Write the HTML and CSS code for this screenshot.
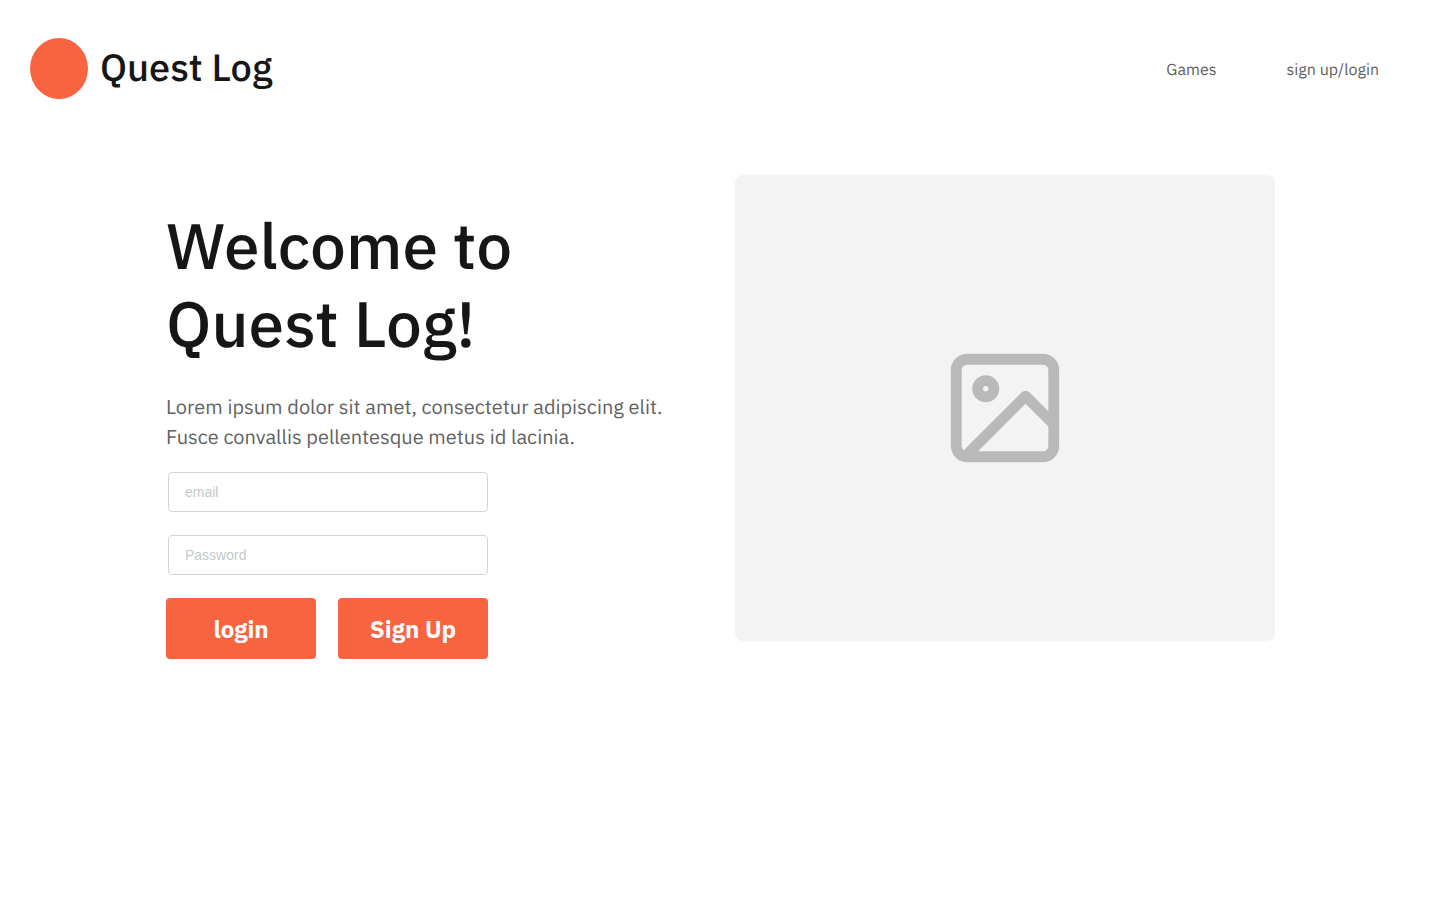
FILE: index.html
```html
<!DOCTYPE html>
<html lang="en">
<head>
  <meta charset="utf-8">
  <meta name="viewport" content="width=device-width, initial-scale=1">
  <title>Quest Log</title>
  <link rel="stylesheet" href="styles.css">
</head>
<body>
  <header class="site-header">
    <a class="brand" href="#">
      <span class="brand-mark"></span>
      <span class="brand-name">Quest Log</span>
    </a>
    <nav class="site-nav">
      <a href="#games">Games</a>
      <a href="#login">sign up/login</a>
    </nav>
  </header>
  <main class="hero">
    <section class="intro">
      <h1 class="title">Welcome to<br>Quest Log!</h1>
      <p class="lead">Lorem ipsum dolor sit amet, consectetur adipiscing elit.<br>Fusce convallis pellentesque metus id lacinia.</p>
      <form class="login-form" id="login">
        <input class="field" type="email" placeholder="email" aria-label="email">
        <input class="field" type="password" placeholder="Password" aria-label="Password">
        <div class="actions">
          <button class="button" type="submit">login</button>
          <button class="button" type="button">Sign Up</button>
        </div>
      </form>
    </section>
    <div class="picture">
      <svg class="picture-icon" viewBox="0 0 24 24" fill="none" stroke="currentColor" stroke-width="2" stroke-linecap="round" stroke-linejoin="round" aria-hidden="true">
        <rect x="3" y="3" width="18" height="18" rx="2"/>
        <circle cx="8.45" cy="8.45" r="1.5"/>
        <polyline points="21 15 15.8 9.8 4.8 20.8"/>
      </svg>
    </div>
  </main>
</body>
</html>
```

FILE: styles.css
```css
* {
  box-sizing: border-box;
}

body {
  margin: 0;
  background: #fff;
  color: #161616;
  font-family: "IBM Plex Sans", Roboto, "Noto Sans", sans-serif;
  text-rendering: geometricPrecision;
}

a {
  color: inherit;
  text-decoration: none;
}

.site-header {
  display: flex;
  align-items: center;
  justify-content: space-between;
  padding: 38px 61px 0 30px;
}

.brand {
  display: flex;
  align-items: center;
  gap: 12px;
}

.brand-mark {
  width: 58px;
  height: 61px;
  border-radius: 50%;
  background: #f86440;
}

.brand-name {
  padding-bottom: 2px;
  font-size: 38px;
  font-weight: 500;
  line-height: 52px;
}

.site-nav {
  display: flex;
  gap: 70px;
  padding-top: 2px;
  color: #626262;
  font-size: 16px;
  line-height: 24px;
}

.hero {
  display: flex;
  justify-content: space-between;
  align-items: flex-start;
  gap: 40px;
  padding: 76px 165px 40px 166px;
}

.intro {
  padding-top: 31px;
}

.title {
  margin: 0 0 30px;
  font-size: 64px;
  font-weight: 500;
  line-height: 78px;
}

.lead {
  margin: 0 0 20px;
  color: #626262;
  font-size: 20px;
  line-height: 30px;
}

.login-form {
  display: flex;
  flex-direction: column;
  align-items: flex-end;
  gap: 23px;
  width: 322px;
}

.field {
  width: 320px;
  height: 40px;
  padding: 0 16px;
  border: 1px solid #d3d4d5;
  border-radius: 4px;
  background: #fff;
  color: #161616;
  font-family: "Liberation Sans", Arial, sans-serif;
  font-size: 14px;
}

.field::placeholder {
  color: #c3cbc9;
  opacity: 1;
}

.actions {
  display: grid;
  grid-template-columns: 1fr 1fr;
  gap: 22px;
  width: 100%;
}

.button {
  height: 61px;
  padding: 0;
  border: 0;
  border-radius: 4px;
  background: #f86440;
  color: #fff;
  font-family: inherit;
  font-size: 24px;
  font-weight: 700;
  cursor: pointer;
}

.picture {
  display: grid;
  place-items: center;
  flex: 0 1 540px;
  height: 466px;
  border-radius: 8px;
  background: #f3f3f3;
  color: #b9b9b9;
}

.picture-icon {
  width: 130px;
  height: 130px;
}
```
